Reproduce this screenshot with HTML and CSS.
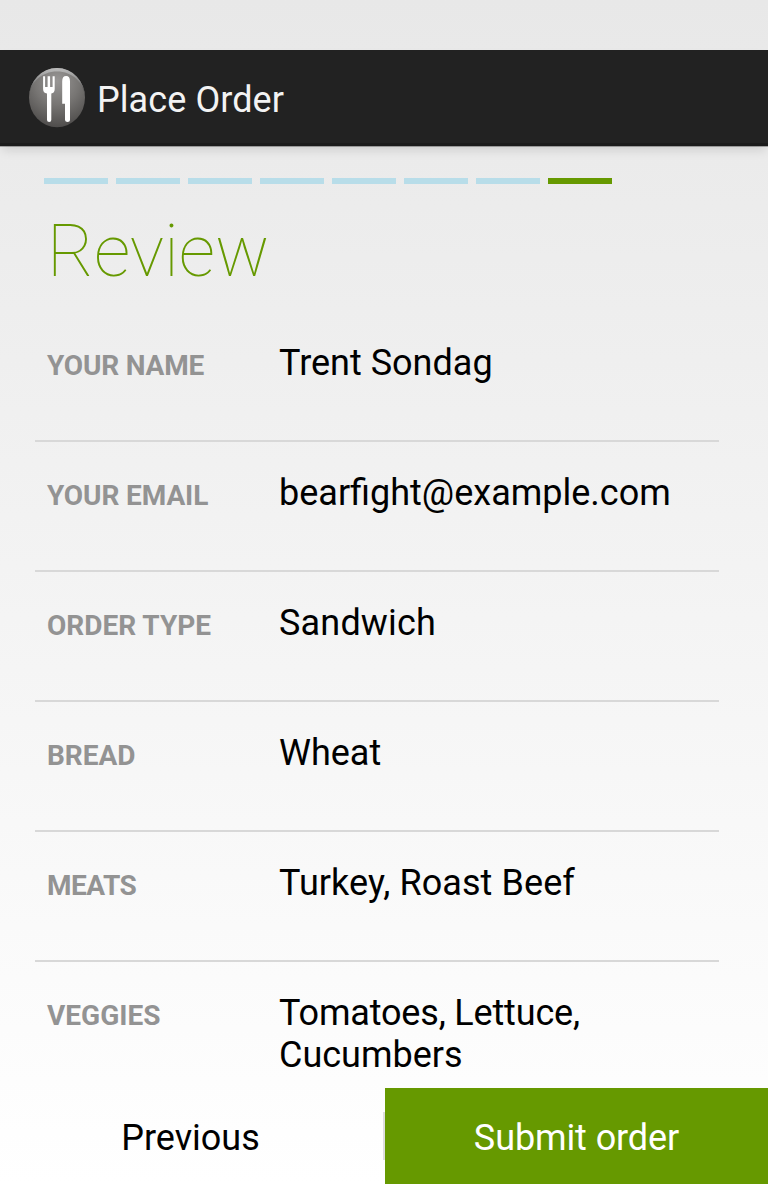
FILE: index.html
```html
<!DOCTYPE html>
<html lang="en"><head><meta charset="utf-8"><title>Place Order</title><link rel="stylesheet" href="styles.css"></head>
<body>
<header class="bar">
<svg class="logo" width="56" height="60" viewBox="0 0 56 60">
<defs>
<radialGradient id="disc" cx=".5" cy=".22" r=".8"><stop offset="0" stop-color="#989695"/><stop offset=".5" stop-color="#777573"/><stop offset="1" stop-color="#4d4b4a"/></radialGradient>
<linearGradient id="rim" x1="0" y1="0" x2="0" y2="1"><stop offset="0" stop-color="#bdbdbd"/><stop offset=".45" stop-color="#8a8a8a"/><stop offset=".7" stop-color="#5a5a5a"/></linearGradient>
</defs>
<ellipse cx="28" cy="29.6" rx="28" ry="29.6" fill="url(#disc)"/>
<path d="M0 29.6a28 29.6 0 0 1 56 0C55 14 43 3.4 28 3.4S1 14 0 29.6z" fill="url(#rim)"/>
<path d="M14.1 8.2h2V19h2.5V8.2h2.5V19h2.5V8.2h2.1V21q0 4-3.4 4.6V52q0 2-2.1 2t-2.2-2V25.6Q14.1 25 14.1 21z" fill="#fff"/>
<path d="M33.2 13.2q0-5.2 3.9-5.2 3.9 0 3.9 5.2V52q0 2-2.4 2T36 52V35.7h-2.8z" fill="#fff"/>
</svg>
<h1 class="bar-title">Place Order</h1></header>
<main class="page">
<div class="steps"><i class="step"></i><i class="step"></i><i class="step"></i><i class="step"></i><i class="step"></i><i class="step"></i><i class="step"></i><i class="step current"></i></div>
<h2 class="title">Review</h2>
<dl class="list">
<div class="row"><dt class="label tight">YOUR NAME</dt><dd class="value">Trent Sondag</dd></div>
<div class="row"><dt class="label snug">YOUR EMAIL</dt><dd class="value">bearfight@example.com</dd></div>
<div class="row"><dt class="label">ORDER TYPE</dt><dd class="value loose">Sandwich</dd></div>
<div class="row"><dt class="label">BREAD</dt><dd class="value">Wheat</dd></div>
<div class="row"><dt class="label tighter">MEATS</dt><dd class="value wide">Turkey, Roast Beef</dd></div>
<div class="row"><dt class="label">VEGGIES</dt><dd class="value"><span class="tight">Tomatoes, Lettuce,</span> Cucumbers</dd></div>
</dl></main>
<footer class="actions"><button class="btn previous">Previous</button><span class="divider"></span><button class="btn submit">Submit order</button></footer>
</body></html>
```
FILE: styles.css
```css
* { box-sizing: border-box; margin: 0; padding: 0; }
body { width: 768px; height: 1184px; overflow: hidden; display: flex; flex-direction: column; padding-top: 50px; font-family: Roboto, sans-serif; color: #000; background: linear-gradient(#e8e8e8, #fff); }
.bar { flex: none; height: 96px; display: flex; align-items: center; padding-left: 29px; background: #222; border-bottom: 3px solid #1b1b1b; box-shadow: 0 1px 0 rgba(0,0,0,.28), 0 6px 10px -2px rgba(0,0,0,.12); }
.logo { margin: 3px 12px 0 0; }
.bar-title { padding-top: 6px; font-size: 36px; font-weight: 400; color: #f3f3f3; line-height: 42px; letter-spacing: .08px; }
.page { flex: 1; min-height: 0; overflow: hidden; padding: 32px 49px 0 35px; }
.steps { display: flex; gap: 8px; padding-left: 9px; }
.step { width: 64px; height: 6px; background: #b8dde9; }
.current { background: #690; }
.title { margin: 26px 0 0 12px; height: 102px; font-size: 72px; line-height: 84px; font-weight: 100; color: #690; letter-spacing: -.1px; }
.row { height: 130px; display: flex; padding: 30px 12px 0; border-bottom: 2px solid #d8d8d8; }
.row:last-child { border: 0; }
.label { width: 232px; padding-top: 7px; font-size: 28px; line-height: 33px; font-weight: 700; color: #939393; }
.value { flex: 1; font-size: 36px; line-height: 42px; }
.tight { letter-spacing: -.17px; }
.tighter { letter-spacing: -.5px; }
.snug { letter-spacing: -.1px; }
.loose { letter-spacing: .18px; }
.wide { letter-spacing: .08px; }
.actions { flex: none; height: 96px; display: flex; align-items: center; }
.btn { width: 383px; height: 96px; padding-top: 4px; border: 0; background: none; font: 400 36px/42px Roboto, sans-serif; color: #000; }
.previous { padding-right: 2px; }
.divider { width: 2px; height: 48px; background: #dedede; }
.submit { background: #690; color: #fff; letter-spacing: -.1px; }
```
